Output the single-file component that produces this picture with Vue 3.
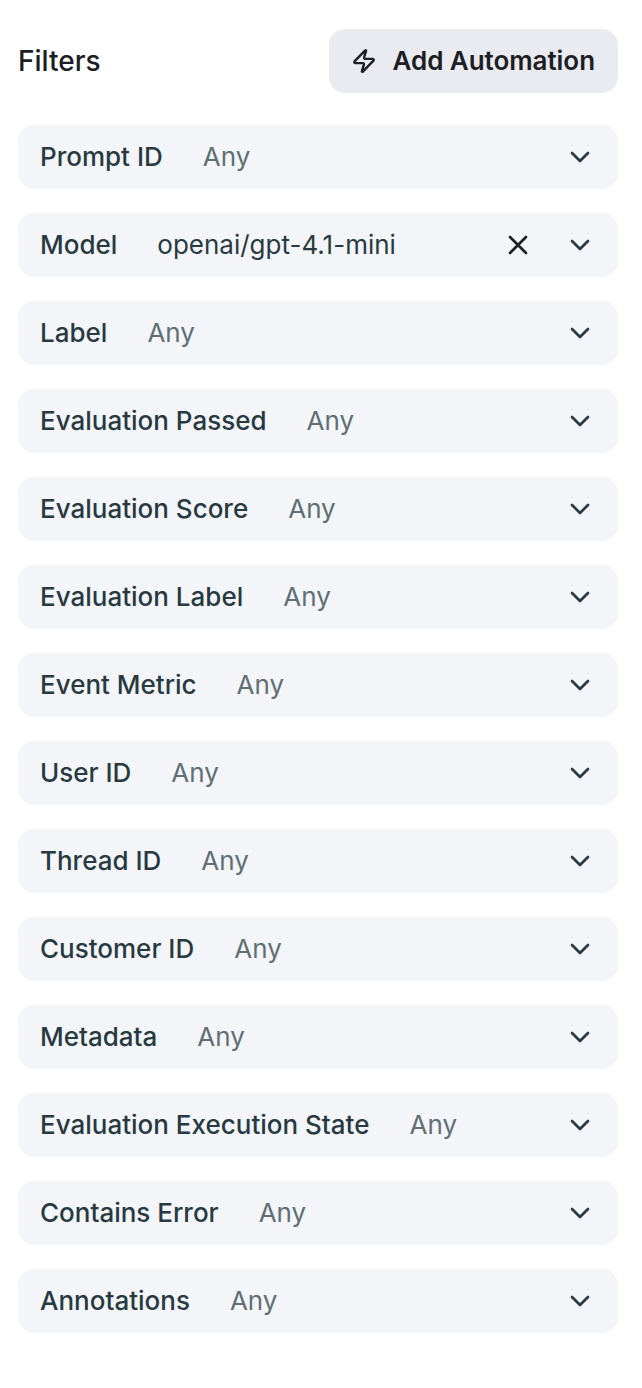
<script setup>
const filters = [
  { label: 'Prompt ID' },
  { label: 'Model', value: 'openai/gpt-4.1-mini' },
  { label: 'Label' },
  { label: 'Evaluation Passed' },
  { label: 'Evaluation Score' },
  { label: 'Evaluation Label' },
  { label: 'Event Metric' },
  { label: 'User ID' },
  { label: 'Thread ID' },
  { label: 'Customer ID' },
  { label: 'Metadata' },
  { label: 'Evaluation Execution State' },
  { label: 'Contains Error' },
  { label: 'Annotations' },
]
</script>

<template>
  <div class="panel">
    <header class="panel__head">
      <h2>Filters</h2>
      <button type="button" class="add-btn">
        <svg width="26" height="26" viewBox="0 0 24 24" fill="none" stroke="currentColor" stroke-width="2.2" stroke-linecap="round" stroke-linejoin="round">
          <path d="M4 14a1 1 0 0 1-.78-1.63l9.9-10.2a.5.5 0 0 1 .86.46l-1.92 6.02A1 1 0 0 0 13 10h7a1 1 0 0 1 .78 1.63l-9.9 10.2a.5.5 0 0 1-.86-.46l1.92-6.02A1 1 0 0 0 11 14z" />
        </svg>
        <span class="add-btn__text">Add Automation</span>
      </button>
    </header>

    <div class="filters">
      <div v-for="f in filters" :key="f.label" class="filter">
        <span class="filter__label">{{ f.label }}</span>
        <span class="filter__value" :class="{ 'filter__value--set': f.value }">{{ f.value || 'Any' }}</span>
        <svg v-if="f.value" class="filter__clear" width="32" height="32" viewBox="0 0 24 24" fill="none" stroke="currentColor" stroke-width="2" stroke-linecap="round" stroke-linejoin="round">
          <path d="M18 6 6 18M6 6l12 12" />
        </svg>
        <svg class="filter__chevron" width="32" height="32" viewBox="0 0 24 24" fill="none" stroke="currentColor" stroke-width="2" stroke-linecap="round" stroke-linejoin="round">
          <path d="m6 9 6 6 6-6" />
        </svg>
      </div>
    </div>
  </div>
</template>

<style scoped>
.panel {
  box-sizing: border-box;
  width: 642px;
  height: 1388px;
  padding: 29px 24px 0 18px;
  background: #fff;
  font-family: Inter, "Liberation Sans", sans-serif;
  color: #283a3f;
}

.panel__head {
  display: flex;
  align-items: center;
  justify-content: space-between;
  height: 64px;
  margin-bottom: 32px;
}

.panel__head h2 {
  margin: 0;
  font-size: 28px;
  font-weight: 500;
  color: #1c2024;
}

.add-btn {
  display: flex;
  align-items: center;
  gap: 16px;
  height: 64px;
  padding: 0 23px 0 22px;
  border: 0;
  border-radius: 16px;
  background: #e9ebf1;
  color: #1c2024;
  font-family: inherit;
  font-size: 26px;
  font-weight: 600;
}

.add-btn__text {
  margin-bottom: 2px;
  letter-spacing: -0.05px;
}

.filters {
  display: flex;
  flex-direction: column;
  gap: 24px;
}

.filter {
  display: flex;
  align-items: center;
  height: 64px;
  padding: 0 22px;
  border-radius: 16px;
  background: #f3f5f9;
}

.filter__label {
  margin-bottom: 2px;
  font-size: 26px;
  font-weight: 500;
  white-space: nowrap;
}

.filter__value {
  flex: 1;
  margin-bottom: 2px;
  margin-left: 40px;
  font-size: 26px;
  color: #5f6f73;
  white-space: nowrap;
}

.filter__value--set {
  color: #283a3f;
}

.filter__clear {
  margin-right: 30px;
  color: #1c2024;
}

.filter__chevron {
  color: #283a3f;
}
</style>
